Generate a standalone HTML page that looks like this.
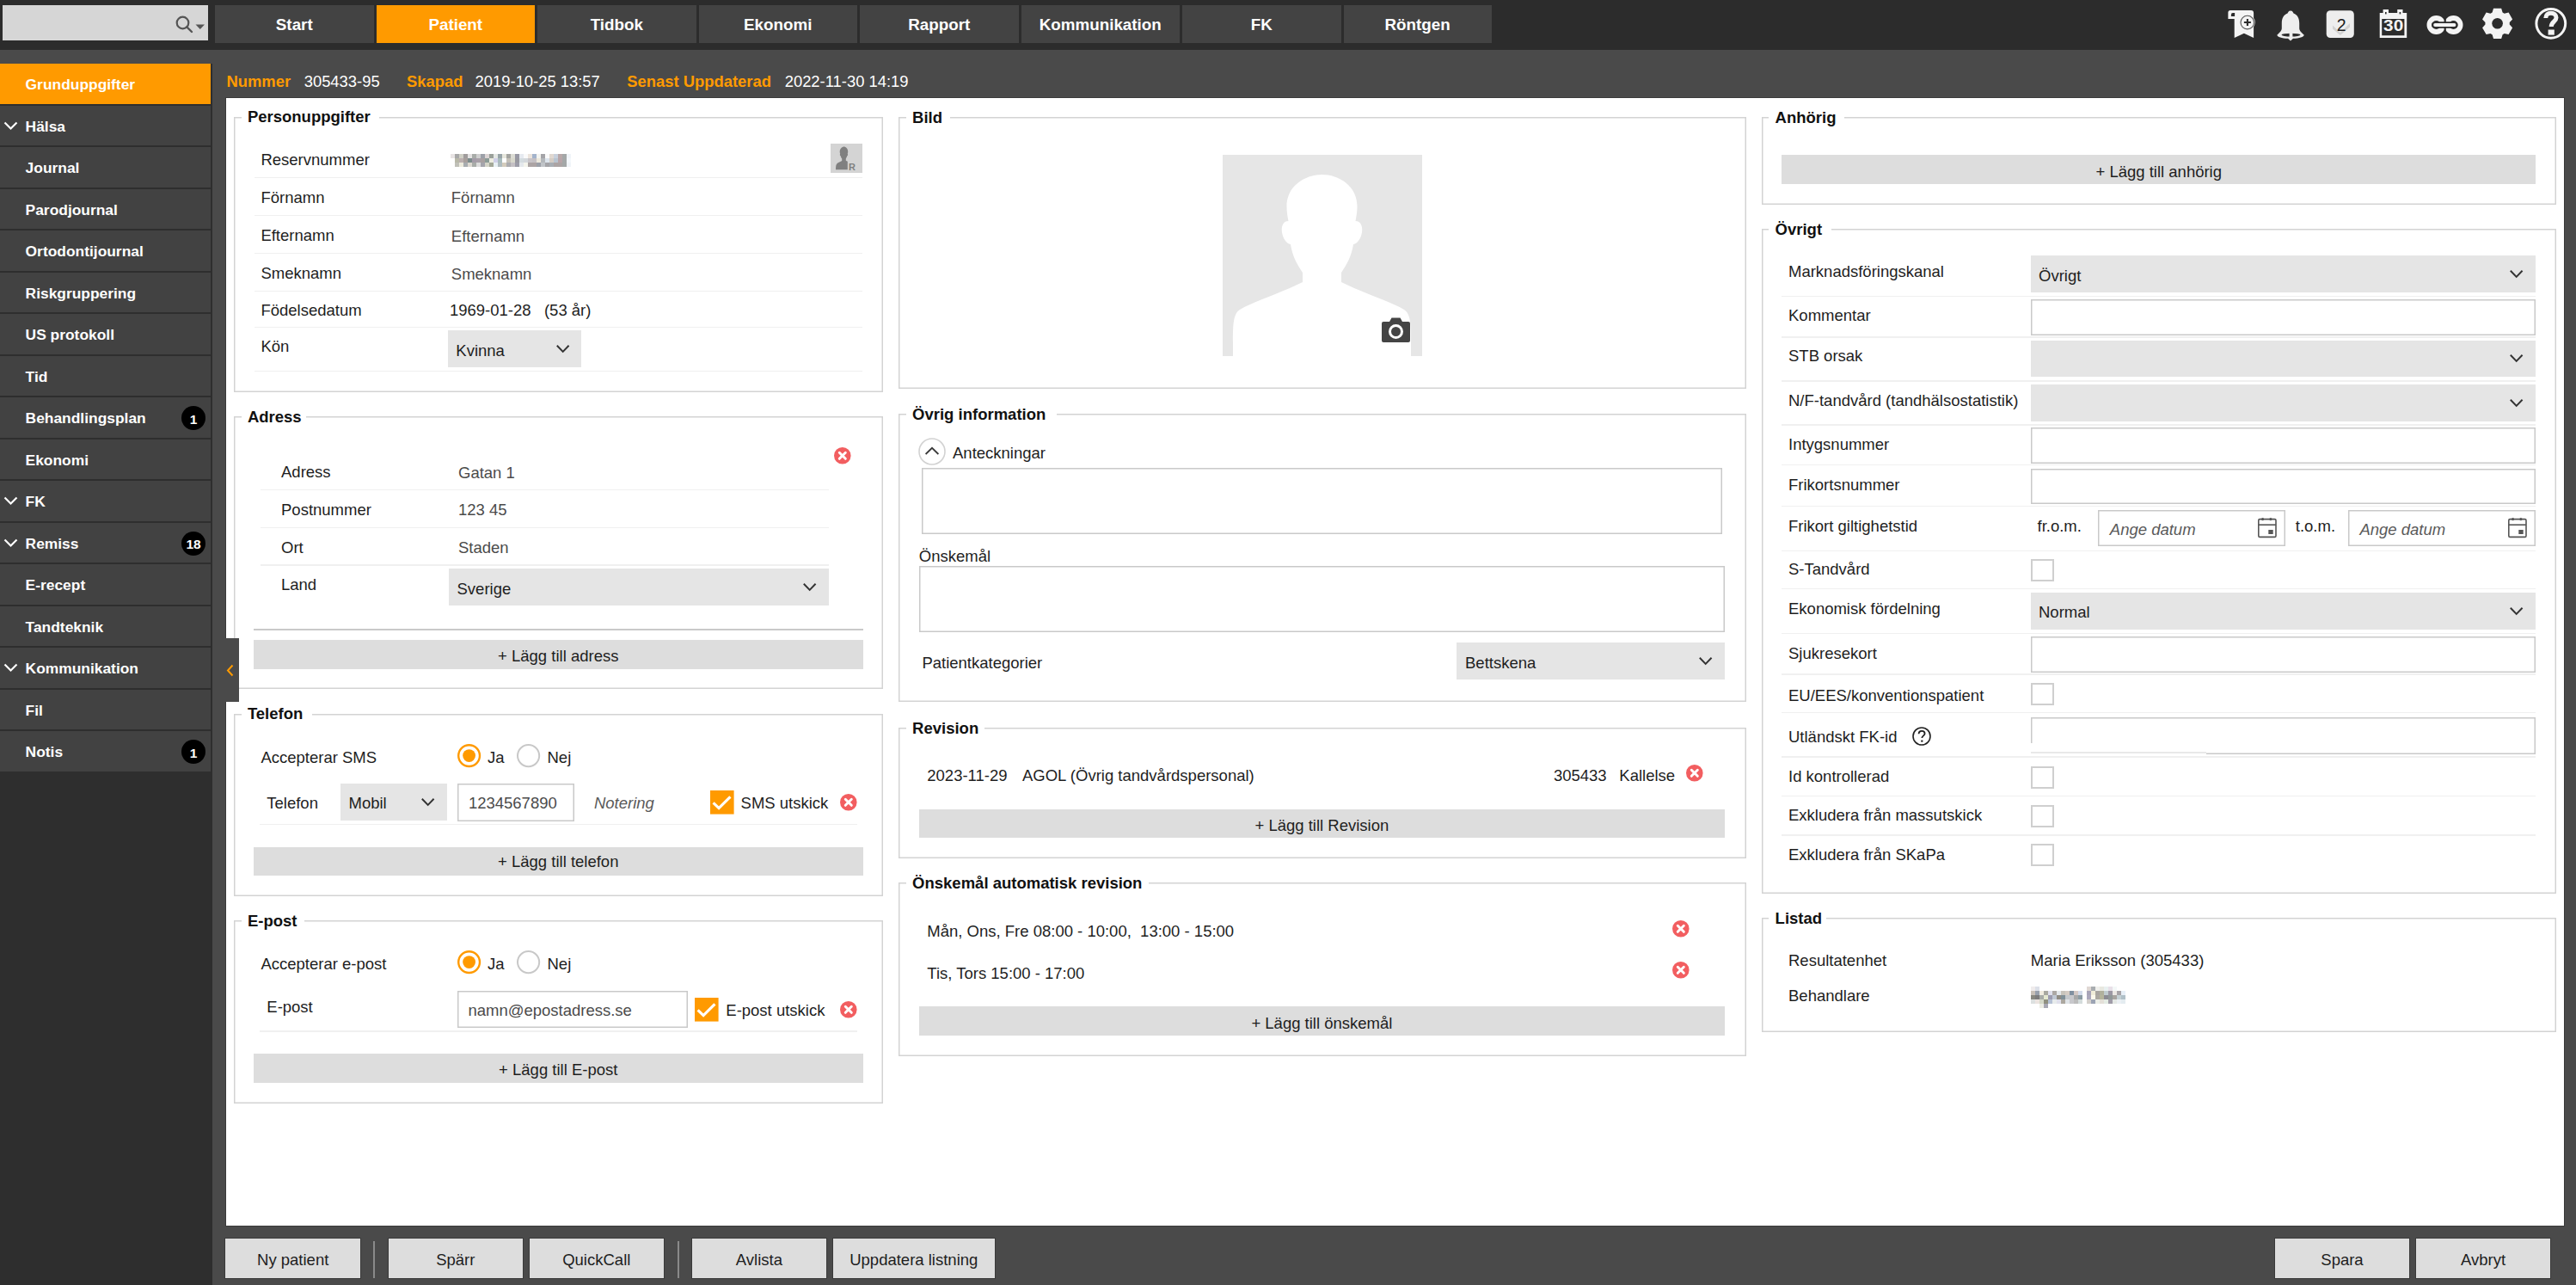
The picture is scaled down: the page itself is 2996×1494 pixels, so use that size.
<!DOCTYPE html><html><head><meta charset="utf-8"><style>
html,body{margin:0;padding:0;}
body{width:2996px;height:1494px;overflow:hidden;position:relative;background:#4a4a4a;font-family:"Liberation Sans",sans-serif;}
.t{position:absolute;white-space:nowrap;line-height:1;}
.r{position:absolute;box-sizing:border-box;}
svg{position:absolute;overflow:visible;}
</style></head><body>
<div class="r" style="left:0.0px;top:0.0px;width:2996.0px;height:57.5px;background:#2c2c2c;"></div>
<div class="r" style="left:3.0px;top:6.0px;width:239.0px;height:40.6px;background:#d6d6d6;"></div>
<svg style="left:203px;top:17px" width="40" height="24" viewBox="0 0 40 24"><circle cx="9.5" cy="9.5" r="6.8" fill="none" stroke="#555" stroke-width="2.2"/><line x1="14.3" y1="14.3" x2="20" y2="20" stroke="#555" stroke-width="2.4" stroke-linecap="round"/><polygon points="24.5,11.5 35,11.5 29.75,17" fill="#555"/></svg>
<div class="r" style="left:250.0px;top:6.0px;width:184.5px;height:44.0px;background:#434343;"></div>
<div class="t" style="left:250.0px;width:184.5px;text-align:center;top:20.1px;font-size:18.8px;font-weight:700;color:#ffffff;">Start</div>
<div class="r" style="left:437.5px;top:6.0px;width:184.5px;height:44.0px;background:#ff9a00;"></div>
<div class="t" style="left:437.5px;width:184.5px;text-align:center;top:20.1px;font-size:18.8px;font-weight:700;color:#ffffff;">Patient</div>
<div class="r" style="left:625.0px;top:6.0px;width:184.5px;height:44.0px;background:#434343;"></div>
<div class="t" style="left:625.0px;width:184.5px;text-align:center;top:20.1px;font-size:18.8px;font-weight:700;color:#ffffff;">Tidbok</div>
<div class="r" style="left:812.5px;top:6.0px;width:184.5px;height:44.0px;background:#434343;"></div>
<div class="t" style="left:812.5px;width:184.5px;text-align:center;top:20.1px;font-size:18.8px;font-weight:700;color:#ffffff;">Ekonomi</div>
<div class="r" style="left:1000.0px;top:6.0px;width:184.5px;height:44.0px;background:#434343;"></div>
<div class="t" style="left:1000.0px;width:184.5px;text-align:center;top:20.1px;font-size:18.8px;font-weight:700;color:#ffffff;">Rapport</div>
<div class="r" style="left:1187.5px;top:6.0px;width:184.5px;height:44.0px;background:#434343;"></div>
<div class="t" style="left:1187.5px;width:184.5px;text-align:center;top:20.1px;font-size:18.8px;font-weight:700;color:#ffffff;">Kommunikation</div>
<div class="r" style="left:1375.0px;top:6.0px;width:184.5px;height:44.0px;background:#434343;"></div>
<div class="t" style="left:1375.0px;width:184.5px;text-align:center;top:20.1px;font-size:18.8px;font-weight:700;color:#ffffff;">FK</div>
<div class="r" style="left:1562.5px;top:6.0px;width:172.2px;height:44.0px;background:#434343;"></div>
<div class="t" style="left:1562.5px;width:172.2px;text-align:center;top:20.1px;font-size:18.8px;font-weight:700;color:#ffffff;">Röntgen</div>
<div class="r" style="left:0.0px;top:74.2px;width:247.0px;height:1419.8px;background:#2e2e2e;"></div>
<div class="r" style="left:0.0px;top:74.2px;width:245.0px;height:46.5px;background:#ff9a00;"></div>
<div class="t" style="left:29.6px;top:90.2px;font-size:17.4px;font-weight:700;color:#ffffff;">Grunduppgifter</div>
<div class="r" style="left:0.0px;top:122.7px;width:245.0px;height:46.5px;background:#424242;"></div>
<div class="t" style="left:29.6px;top:138.7px;font-size:17.4px;font-weight:700;color:#ffffff;">Hälsa</div>
<svg style="left:4px;top:140.7px" width="17" height="10" viewBox="0 0 17 10"><polyline points="1.5,1.5 8.5,8.5 15.5,1.5" fill="none" stroke="#fff" stroke-width="2.2"/></svg>
<div class="r" style="left:0.0px;top:171.2px;width:245.0px;height:46.5px;background:#424242;"></div>
<div class="t" style="left:29.6px;top:187.2px;font-size:17.4px;font-weight:700;color:#ffffff;">Journal</div>
<div class="r" style="left:0.0px;top:219.7px;width:245.0px;height:46.5px;background:#424242;"></div>
<div class="t" style="left:29.6px;top:235.7px;font-size:17.4px;font-weight:700;color:#ffffff;">Parodjournal</div>
<div class="r" style="left:0.0px;top:268.2px;width:245.0px;height:46.5px;background:#424242;"></div>
<div class="t" style="left:29.6px;top:284.2px;font-size:17.4px;font-weight:700;color:#ffffff;">Ortodontijournal</div>
<div class="r" style="left:0.0px;top:316.7px;width:245.0px;height:46.5px;background:#424242;"></div>
<div class="t" style="left:29.6px;top:332.7px;font-size:17.4px;font-weight:700;color:#ffffff;">Riskgruppering</div>
<div class="r" style="left:0.0px;top:365.2px;width:245.0px;height:46.5px;background:#424242;"></div>
<div class="t" style="left:29.6px;top:381.2px;font-size:17.4px;font-weight:700;color:#ffffff;">US protokoll</div>
<div class="r" style="left:0.0px;top:413.7px;width:245.0px;height:46.5px;background:#424242;"></div>
<div class="t" style="left:29.6px;top:429.7px;font-size:17.4px;font-weight:700;color:#ffffff;">Tid</div>
<div class="r" style="left:0.0px;top:462.2px;width:245.0px;height:46.5px;background:#424242;"></div>
<div class="t" style="left:29.6px;top:478.2px;font-size:17.4px;font-weight:700;color:#ffffff;">Behandlingsplan</div>
<div class="r" style="left:211.0px;top:472.2px;width:28.0px;height:28.0px;background:#000;border-radius:50%;"></div>
<div class="t" style="left:211.0px;width:28.0px;text-align:center;top:479.6px;font-size:15.5px;font-weight:700;color:#fff;">1</div>
<div class="r" style="left:0.0px;top:510.7px;width:245.0px;height:46.5px;background:#424242;"></div>
<div class="t" style="left:29.6px;top:526.7px;font-size:17.4px;font-weight:700;color:#ffffff;">Ekonomi</div>
<div class="r" style="left:0.0px;top:559.2px;width:245.0px;height:46.5px;background:#424242;"></div>
<div class="t" style="left:29.6px;top:575.2px;font-size:17.4px;font-weight:700;color:#ffffff;">FK</div>
<svg style="left:4px;top:577.2px" width="17" height="10" viewBox="0 0 17 10"><polyline points="1.5,1.5 8.5,8.5 15.5,1.5" fill="none" stroke="#fff" stroke-width="2.2"/></svg>
<div class="r" style="left:0.0px;top:607.7px;width:245.0px;height:46.5px;background:#424242;"></div>
<div class="t" style="left:29.6px;top:623.7px;font-size:17.4px;font-weight:700;color:#ffffff;">Remiss</div>
<svg style="left:4px;top:625.7px" width="17" height="10" viewBox="0 0 17 10"><polyline points="1.5,1.5 8.5,8.5 15.5,1.5" fill="none" stroke="#fff" stroke-width="2.2"/></svg>
<div class="r" style="left:211.0px;top:617.7px;width:28.0px;height:28.0px;background:#000;border-radius:50%;"></div>
<div class="t" style="left:211.0px;width:28.0px;text-align:center;top:625.1px;font-size:15.5px;font-weight:700;color:#fff;">18</div>
<div class="r" style="left:0.0px;top:656.2px;width:245.0px;height:46.5px;background:#424242;"></div>
<div class="t" style="left:29.6px;top:672.2px;font-size:17.4px;font-weight:700;color:#ffffff;">E-recept</div>
<div class="r" style="left:0.0px;top:704.7px;width:245.0px;height:46.5px;background:#424242;"></div>
<div class="t" style="left:29.6px;top:720.7px;font-size:17.4px;font-weight:700;color:#ffffff;">Tandteknik</div>
<div class="r" style="left:0.0px;top:753.2px;width:245.0px;height:46.5px;background:#424242;"></div>
<div class="t" style="left:29.6px;top:769.2px;font-size:17.4px;font-weight:700;color:#ffffff;">Kommunikation</div>
<svg style="left:4px;top:771.2px" width="17" height="10" viewBox="0 0 17 10"><polyline points="1.5,1.5 8.5,8.5 15.5,1.5" fill="none" stroke="#fff" stroke-width="2.2"/></svg>
<div class="r" style="left:0.0px;top:801.7px;width:245.0px;height:46.5px;background:#424242;"></div>
<div class="t" style="left:29.6px;top:817.7px;font-size:17.4px;font-weight:700;color:#ffffff;">Fil</div>
<div class="r" style="left:0.0px;top:850.2px;width:245.0px;height:46.5px;background:#424242;"></div>
<div class="t" style="left:29.6px;top:866.2px;font-size:17.4px;font-weight:700;color:#ffffff;">Notis</div>
<div class="r" style="left:211.0px;top:860.2px;width:28.0px;height:28.0px;background:#000;border-radius:50%;"></div>
<div class="t" style="left:211.0px;width:28.0px;text-align:center;top:867.6px;font-size:15.5px;font-weight:700;color:#fff;">1</div>
<div class="t" style="left:263.5px;top:86.4px;font-size:18.4px;font-weight:700;color:#ff9a00;">Nummer</div>
<div class="t" style="left:353.7px;top:86.4px;font-size:18.4px;color:#ffffff;">305433-95</div>
<div class="t" style="left:473.0px;top:86.4px;font-size:18.4px;font-weight:700;color:#ff9a00;">Skapad</div>
<div class="t" style="left:552.6px;top:86.4px;font-size:18.4px;color:#ffffff;">2019-10-25 13:57</div>
<div class="t" style="left:729.3px;top:86.4px;font-size:18.4px;font-weight:700;color:#ff9a00;">Senast Uppdaterad</div>
<div class="t" style="left:912.7px;top:86.4px;font-size:18.4px;color:#ffffff;">2022-11-30 14:19</div>
<div class="r" style="left:261.5px;top:112.8px;width:2721.5px;height:1313.5px;background:#3a3a3a;"></div>
<div class="r" style="left:262.5px;top:113.6px;width:2719.7px;height:1311.9px;background:#ffffff;"></div>
<div class="r" style="left:271.9px;top:135.7px;width:754.9px;height:320.4px;box-shadow:inset 0 0 0 1.5px #d3d3d3;"></div>
<div class="r" style="left:280.6px;top:133.4px;width:160.0px;height:6.0px;background:#ffffff;"></div>
<div class="t" style="left:287.9px;top:127.4px;font-size:18.5px;font-weight:700;color:#111111;">Personuppgifter</div>
<div class="t" style="left:303.4px;top:176.9px;font-size:18.5px;color:#1e1e1e;">Reservnummer</div>
<div class="t" style="left:303.4px;top:220.5px;font-size:18.5px;color:#1e1e1e;">Förnamn</div>
<div class="t" style="left:524.8px;top:221.4px;font-size:18.5px;color:#4b4b4b;">Förnamn</div>
<div class="t" style="left:303.4px;top:265.0px;font-size:18.5px;color:#1e1e1e;">Efternamn</div>
<div class="t" style="left:524.8px;top:265.8px;font-size:18.5px;color:#4b4b4b;">Efternamn</div>
<div class="t" style="left:303.4px;top:308.6px;font-size:18.5px;color:#1e1e1e;">Smeknamn</div>
<div class="t" style="left:524.8px;top:309.8px;font-size:18.5px;color:#4b4b4b;">Smeknamn</div>
<div class="t" style="left:303.4px;top:351.6px;font-size:18.5px;color:#1e1e1e;">Födelsedatum</div>
<div class="t" style="left:303.4px;top:394.4px;font-size:18.5px;color:#1e1e1e;">Kön</div>
<div class="r" style="left:296.0px;top:206.0px;width:707.0px;height:1.4px;background:#f0f0f0;"></div>
<div class="r" style="left:296.0px;top:250.1px;width:707.0px;height:1.4px;background:#f0f0f0;"></div>
<div class="r" style="left:296.0px;top:293.7px;width:707.0px;height:1.4px;background:#f0f0f0;"></div>
<div class="r" style="left:296.0px;top:337.5px;width:707.0px;height:1.4px;background:#f0f0f0;"></div>
<div class="r" style="left:296.0px;top:379.5px;width:707.0px;height:1.4px;background:#f0f0f0;"></div>
<div class="r" style="left:296.0px;top:430.9px;width:707.0px;height:1.4px;background:#f0f0f0;"></div>
<svg style="left:524px;top:179px" width="140" height="15" viewBox="0 0 140 15" shape-rendering="crispEdges" style="filter:blur(.6px)"><rect x="0" y="0" width="5" height="5" fill="#e8e4e4"/><rect x="5" y="0" width="5" height="5" fill="#a8a8a8"/><rect x="10" y="0" width="5" height="5" fill="#cfcfc5"/><rect x="15" y="0" width="5" height="5" fill="#a09c9c"/><rect x="20" y="0" width="5" height="5" fill="#e4e2e2"/><rect x="25" y="0" width="5" height="5" fill="#a8aca8"/><rect x="30" y="0" width="5" height="5" fill="#cfcfcf"/><rect x="35" y="0" width="5" height="5" fill="#9ca0a8"/><rect x="40" y="0" width="5" height="5" fill="#dcd4d4"/><rect x="45" y="0" width="5" height="5" fill="#9aa09a"/><rect x="50" y="0" width="5" height="5" fill="#e4e8e4"/><rect x="55" y="0" width="5" height="5" fill="#98a4a8"/><rect x="60" y="0" width="5" height="5" fill="#e6e6dc"/><rect x="65" y="0" width="5" height="5" fill="#a4a4a0"/><rect x="70" y="0" width="5" height="5" fill="#dcdcd4"/><rect x="75" y="0" width="5" height="5" fill="#9898a4"/><rect x="80" y="0" width="5" height="5" fill="#e6eaf0"/><rect x="85" y="0" width="5" height="5" fill="#fafafa"/><rect x="90" y="0" width="5" height="5" fill="#ece4dc"/><rect x="95" y="0" width="5" height="5" fill="#a4b4cc"/><rect x="100" y="0" width="5" height="5" fill="#f4f4f0"/><rect x="105" y="0" width="5" height="5" fill="#a4a4a8"/><rect x="110" y="0" width="5" height="5" fill="#fafafa"/><rect x="115" y="0" width="5" height="5" fill="#e0d8d0"/><rect x="120" y="0" width="5" height="5" fill="#c8d0dc"/><rect x="125" y="0" width="5" height="5" fill="#b8a8a8"/><rect x="130" y="0" width="5" height="5" fill="#a4a8a8"/><rect x="135" y="0" width="5" height="5" fill="#f0f4f8"/><rect x="0" y="5" width="5" height="5" fill="#ffffff"/><rect x="5" y="5" width="5" height="5" fill="#b8b8a8"/><rect x="10" y="5" width="5" height="5" fill="#bcb0b0"/><rect x="15" y="5" width="5" height="5" fill="#a8a09c"/><rect x="20" y="5" width="5" height="5" fill="#7c8c8c"/><rect x="25" y="5" width="5" height="5" fill="#a49ca8"/><rect x="30" y="5" width="5" height="5" fill="#a8a0a8"/><rect x="35" y="5" width="5" height="5" fill="#a8a0a0"/><rect x="40" y="5" width="5" height="5" fill="#8c9c98"/><rect x="45" y="5" width="5" height="5" fill="#ecece0"/><rect x="50" y="5" width="5" height="5" fill="#d0d0e8"/><rect x="55" y="5" width="5" height="5" fill="#a8bcbc"/><rect x="60" y="5" width="5" height="5" fill="#ffffff"/><rect x="65" y="5" width="5" height="5" fill="#c4c0b8"/><rect x="70" y="5" width="5" height="5" fill="#d8d8cc"/><rect x="75" y="5" width="5" height="5" fill="#9898a0"/><rect x="80" y="5" width="5" height="5" fill="#d4dce0"/><rect x="85" y="5" width="5" height="5" fill="#d4d8dc"/><rect x="90" y="5" width="5" height="5" fill="#c8c4c8"/><rect x="95" y="5" width="5" height="5" fill="#c4c0c4"/><rect x="100" y="5" width="5" height="5" fill="#ece8dc"/><rect x="105" y="5" width="5" height="5" fill="#b4b8bc"/><rect x="110" y="5" width="5" height="5" fill="#dce4ec"/><rect x="115" y="5" width="5" height="5" fill="#d4ccc4"/><rect x="120" y="5" width="5" height="5" fill="#b8c4d0"/><rect x="125" y="5" width="5" height="5" fill="#b8a4a8"/><rect x="130" y="5" width="5" height="5" fill="#a4a8a8"/><rect x="135" y="5" width="5" height="5" fill="#f4f8fc"/><rect x="0" y="10" width="5" height="5" fill="#ffffff"/><rect x="5" y="10" width="5" height="5" fill="#c0c0b8"/><rect x="10" y="10" width="5" height="5" fill="#eceadc"/><rect x="15" y="10" width="5" height="5" fill="#a8acb0"/><rect x="20" y="10" width="5" height="5" fill="#dcd8d0"/><rect x="25" y="10" width="5" height="5" fill="#a8aca8"/><rect x="30" y="10" width="5" height="5" fill="#dcdcdc"/><rect x="35" y="10" width="5" height="5" fill="#a4a4ac"/><rect x="40" y="10" width="5" height="5" fill="#d4d4c8"/><rect x="45" y="10" width="5" height="5" fill="#a4a898"/><rect x="50" y="10" width="5" height="5" fill="#e8f0f4"/><rect x="55" y="10" width="5" height="5" fill="#b0bcc0"/><rect x="60" y="10" width="5" height="5" fill="#d4ccbc"/><rect x="65" y="10" width="5" height="5" fill="#acacb0"/><rect x="70" y="10" width="5" height="5" fill="#c4c0c4"/><rect x="75" y="10" width="5" height="5" fill="#9c9ca8"/><rect x="80" y="10" width="5" height="5" fill="#e4e8ec"/><rect x="85" y="10" width="5" height="5" fill="#f4f4ec"/><rect x="90" y="10" width="5" height="5" fill="#aca4a4"/><rect x="95" y="10" width="5" height="5" fill="#aca4a4"/><rect x="100" y="10" width="5" height="5" fill="#9ca0a8"/><rect x="105" y="10" width="5" height="5" fill="#c0c4c8"/><rect x="110" y="10" width="5" height="5" fill="#a4a4a8"/><rect x="115" y="10" width="5" height="5" fill="#a8aeb4"/><rect x="120" y="10" width="5" height="5" fill="#aca4a4"/><rect x="125" y="10" width="5" height="5" fill="#aca4a4"/><rect x="130" y="10" width="5" height="5" fill="#a4a8a8"/><rect x="135" y="10" width="5" height="5" fill="#f0f4f8"/></svg>
<div class="r" style="left:966.1px;top:167.3px;width:37.1px;height:33.9px;background:#d4d4d4;"></div>
<svg style="left:966px;top:167px" width="37" height="34" viewBox="0 0 37 34"><path d="M15 3.5 c3.2 0 5.2 2.6 5.2 5.8 c0 1 -.2 1.8 -.5 2.6 c.6 .3 .6 1.6 -.3 2.2 c-.4 1.6 -1.2 2.7 -1.6 3.4 v2.2 l2 1 v9.6 h-13.8 c0 -3.8 .3 -6.6 2.2 -7.7 l5 -2.6 v-2.4 c-.6 -.8 -1.2 -1.9 -1.6 -3.3 c-.9 -.5 -1 -1.8 -.4 -2.2 c-.3 -.8 -.5 -1.7 -.5 -2.6 c0 -3.3 2.2 -5.8 4.3 -5.8z" fill="#808080"/><text x="21" y="30.5" font-family="Liberation Sans" font-weight="700" font-size="11" fill="#808080">R</text></svg>
<div class="t" style="left:522.9px;top:351.6px;font-size:18.5px;color:#1e1e1e;">1969-01-28&nbsp;&nbsp;&nbsp;(53 år)</div>
<div class="r" style="left:520.8px;top:384.4px;width:155.2px;height:43.0px;background:#e5e5e5;"></div>
<div class="t" style="left:530.3px;top:398.6px;font-size:18.5px;color:#1e1e1e;">Kvinna</div>
<svg style="left:647.3px;top:401.0px" width="15.4" height="8.7" viewBox="0 0 15.4 8.7"><polyline points="0.8,0.8 7.7,7.9 14.6,0.8" fill="none" stroke="#333" stroke-width="2"/></svg>
<div class="r" style="left:271.9px;top:484.2px;width:754.9px;height:317.2px;box-shadow:inset 0 0 0 1.5px #d3d3d3;"></div>
<div class="r" style="left:280.6px;top:482.0px;width:75.6px;height:6.0px;background:#ffffff;"></div>
<div class="t" style="left:287.9px;top:476.0px;font-size:18.5px;font-weight:700;color:#111111;">Adress</div>
<div class="t" style="left:327.0px;top:539.8px;font-size:18.5px;color:#1e1e1e;">Adress</div>
<div class="t" style="left:533.0px;top:540.8px;font-size:18.5px;color:#4b4b4b;">Gatan 1</div>
<div class="t" style="left:327.0px;top:583.8px;font-size:18.5px;color:#1e1e1e;">Postnummer</div>
<div class="t" style="left:533.0px;top:584.3px;font-size:18.5px;color:#4b4b4b;">123 45</div>
<div class="t" style="left:327.0px;top:627.5px;font-size:18.5px;color:#1e1e1e;">Ort</div>
<div class="t" style="left:533.0px;top:627.8px;font-size:18.5px;color:#4b4b4b;">Staden</div>
<div class="t" style="left:327.0px;top:670.8px;font-size:18.5px;color:#1e1e1e;">Land</div>
<div class="r" style="left:302.8px;top:568.6px;width:661.2px;height:1.4px;background:#f0f0f0;"></div>
<div class="r" style="left:302.8px;top:612.7px;width:661.2px;height:1.4px;background:#f0f0f0;"></div>
<div class="r" style="left:302.8px;top:656.3px;width:661.2px;height:1.4px;background:#f0f0f0;"></div>
<div class="r" style="left:521.7px;top:660.8px;width:442.3px;height:43.2px;background:#e5e5e5;"></div>
<div class="t" style="left:531.5px;top:675.8px;font-size:18.5px;color:#1e1e1e;">Sverige</div>
<svg style="left:934.3px;top:677.5px" width="15.4" height="8.7" viewBox="0 0 15.4 8.7"><polyline points="0.8,0.8 7.7,7.9 14.6,0.8" fill="none" stroke="#333" stroke-width="2"/></svg>
<svg style="left:970.2px;top:519.7px" width="19.6" height="19.6" viewBox="0 0 20 20"><circle cx="10" cy="10" r="10" fill="#f25e60"/><path d="M6.4 6.4 L13.6 13.6 M13.6 6.4 L6.4 13.6" stroke="#fff" stroke-width="3" stroke-linecap="round"/></svg>
<div class="r" style="left:295.0px;top:731.0px;width:708.5px;height:1.5px;background:#c9c9c9;"></div>
<div class="r" style="left:295.0px;top:744.0px;width:708.5px;height:33.7px;background:#dddddd;"></div>
<div class="t" style="left:295.0px;width:708.5px;text-align:center;top:753.5px;font-size:18.5px;color:#1e1e1e;">+ Lägg till adress</div>
<div class="r" style="left:271.9px;top:829.5px;width:754.9px;height:212.9px;box-shadow:inset 0 0 0 1.5px #d3d3d3;"></div>
<div class="r" style="left:280.6px;top:827.2px;width:82.6px;height:6.0px;background:#ffffff;"></div>
<div class="t" style="left:287.9px;top:821.2px;font-size:18.5px;font-weight:700;color:#111111;">Telefon</div>
<div class="t" style="left:303.4px;top:871.8px;font-size:18.5px;color:#1e1e1e;">Accepterar SMS</div>
<svg style="left:531.7px;top:864.5px" width="27.2" height="27.2" viewBox="0 0 27.2 27.2"><circle cx="13.6" cy="13.6" r="12.4" fill="#fff" stroke="#ff9a00" stroke-width="2.4"/><circle cx="13.6" cy="13.6" r="7.4" fill="#ff9a00"/></svg>
<div class="t" style="left:567.0px;top:871.8px;font-size:18.5px;color:#1e1e1e;">Ja</div>
<svg style="left:600.6px;top:864.5px" width="27.2" height="27.2" viewBox="0 0 27.2 27.2"><circle cx="13.6" cy="13.6" r="12.6" fill="#fff" stroke="#c8c8c8" stroke-width="2"/></svg>
<div class="t" style="left:636.5px;top:871.8px;font-size:18.5px;color:#1e1e1e;">Nej</div>
<div class="t" style="left:310.3px;top:925.2px;font-size:18.5px;color:#1e1e1e;">Telefon</div>
<div class="r" style="left:395.5px;top:911.0px;width:124.7px;height:43.0px;background:#e5e5e5;"></div>
<div class="t" style="left:405.5px;top:925.2px;font-size:18.5px;color:#1e1e1e;">Mobil</div>
<svg style="left:490.3px;top:927.6px" width="15.4" height="8.7" viewBox="0 0 15.4 8.7"><polyline points="0.8,0.8 7.7,7.9 14.6,0.8" fill="none" stroke="#333" stroke-width="2"/></svg>
<div class="r" style="left:531.7px;top:911.4px;width:136.5px;height:43.2px;background:#ffffff;box-shadow:inset 0 0 0 1.5px #c9c9c9;"></div>
<div class="t" style="left:544.9px;top:925.3px;font-size:18.5px;color:#4b4b4b;">1234567890</div>
<div class="t" style="left:690.9px;top:925.2px;font-size:18.5px;color:#5a5a5a;font-style:italic;">Notering</div>
<svg style="left:825.5px;top:919.0px" width="27.6" height="27.6" viewBox="0 0 27.6 27.6"><rect x="0" y="0" width="27.6" height="27.6" fill="#ff9a00"/><polyline points="3.6,14.3 10.1,20.6 23.4,7.4" fill="none" stroke="#fff" stroke-width="3.2"/></svg>
<div class="t" style="left:861.6px;top:925.2px;font-size:18.5px;color:#1e1e1e;">SMS utskick</div>
<svg style="left:976.5px;top:923.0px" width="19.6" height="19.6" viewBox="0 0 20 20"><circle cx="10" cy="10" r="10" fill="#f25e60"/><path d="M6.4 6.4 L13.6 13.6 M13.6 6.4 L6.4 13.6" stroke="#fff" stroke-width="3" stroke-linecap="round"/></svg>
<div class="r" style="left:302.0px;top:957.9px;width:695.0px;height:1.4px;background:#f0f0f0;"></div>
<div class="r" style="left:295.0px;top:984.8px;width:708.5px;height:33.2px;background:#dddddd;"></div>
<div class="t" style="left:295.0px;width:708.5px;text-align:center;top:993.2px;font-size:18.5px;color:#1e1e1e;">+ Lägg till telefon</div>
<div class="r" style="left:271.9px;top:1070.0px;width:754.9px;height:212.9px;box-shadow:inset 0 0 0 1.5px #d3d3d3;"></div>
<div class="r" style="left:280.6px;top:1067.8px;width:73.5px;height:6.0px;background:#ffffff;"></div>
<div class="t" style="left:287.9px;top:1061.8px;font-size:18.5px;font-weight:700;color:#111111;">E-post</div>
<div class="t" style="left:303.4px;top:1112.4px;font-size:18.5px;color:#1e1e1e;">Accepterar e-post</div>
<svg style="left:531.7px;top:1105.4px" width="27.2" height="27.2" viewBox="0 0 27.2 27.2"><circle cx="13.6" cy="13.6" r="12.4" fill="#fff" stroke="#ff9a00" stroke-width="2.4"/><circle cx="13.6" cy="13.6" r="7.4" fill="#ff9a00"/></svg>
<div class="t" style="left:567.0px;top:1112.4px;font-size:18.5px;color:#1e1e1e;">Ja</div>
<svg style="left:600.6px;top:1105.4px" width="27.2" height="27.2" viewBox="0 0 27.2 27.2"><circle cx="13.6" cy="13.6" r="12.6" fill="#fff" stroke="#c8c8c8" stroke-width="2"/></svg>
<div class="t" style="left:636.5px;top:1112.4px;font-size:18.5px;color:#1e1e1e;">Nej</div>
<div class="t" style="left:310.3px;top:1162.2px;font-size:18.5px;color:#1e1e1e;">E-post</div>
<div class="r" style="left:531.7px;top:1152.4px;width:267.9px;height:42.2px;background:#ffffff;box-shadow:inset 0 0 0 1.5px #c9c9c9;"></div>
<div class="t" style="left:544.4px;top:1165.8px;font-size:18.5px;color:#4b4b4b;">namn@epostadress.se</div>
<svg style="left:808.0px;top:1160.0px" width="27.6" height="27.6" viewBox="0 0 27.6 27.6"><rect x="0" y="0" width="27.6" height="27.6" fill="#ff9a00"/><polyline points="3.6,14.3 10.1,20.6 23.4,7.4" fill="none" stroke="#fff" stroke-width="3.2"/></svg>
<div class="t" style="left:844.3px;top:1165.8px;font-size:18.5px;color:#1e1e1e;">E-post utskick</div>
<svg style="left:976.5px;top:1163.7px" width="19.6" height="19.6" viewBox="0 0 20 20"><circle cx="10" cy="10" r="10" fill="#f25e60"/><path d="M6.4 6.4 L13.6 13.6 M13.6 6.4 L6.4 13.6" stroke="#fff" stroke-width="3" stroke-linecap="round"/></svg>
<div class="r" style="left:302.0px;top:1198.3px;width:695.0px;height:1.4px;background:#f0f0f0;"></div>
<div class="r" style="left:295.0px;top:1225.4px;width:708.5px;height:33.6px;background:#dddddd;"></div>
<div class="t" style="left:295.0px;width:708.5px;text-align:center;top:1234.8px;font-size:18.5px;color:#1e1e1e;">+ Lägg till E-post</div>
<div class="r" style="left:262.0px;top:742.0px;width:16.0px;height:74.0px;background:#4a4a4a;"></div>
<svg style="left:263px;top:772px" width="10" height="15" viewBox="0 0 10 15"><polyline points="7.5,1.5 2,7.5 7.5,13.5" fill="none" stroke="#ff9a00" stroke-width="2"/></svg>
<div class="r" style="left:1045.0px;top:135.8px;width:985.5px;height:316.3px;box-shadow:inset 0 0 0 1.5px #d3d3d3;"></div>
<div class="r" style="left:1053.8px;top:133.5px;width:51.0px;height:6.0px;background:#ffffff;"></div>
<div class="t" style="left:1061.1px;top:127.5px;font-size:18.5px;font-weight:700;color:#111111;">Bild</div>
<div class="r" style="left:1422.0px;top:179.7px;width:231.6px;height:234.3px;background:#e6e6e6;"></div>
<svg style="left:1422px;top:179.7px" width="231.6" height="234.3" viewBox="0 0 231.6 234.3"><path d="M115.6 23 C 96 23 74.5 36 74.5 60 C 74.5 66 75.5 72 76.5 77 C 70 77 68 84 69 90 C 70 97 74 103 79 104 C 81 118 87 128 93 137 L 93 148 L 78 155 C 55 165 33 172 20 180 C 11 186 12 200 12 234.3 L 219 234.3 C 219 200 220 186 211 180 C 198 172 176 165 153 155 L 138 148 L 138 137 C 144 128 150 118 152 104 C 157 103 161 97 162 90 C 163 84 161 77 154.5 77 C 155.5 72 156.5 66 156.5 60 C 156.5 36 135 23 115.6 23 Z" fill="#ffffff"/></svg>
<svg style="left:1606px;top:368px" width="35" height="32" viewBox="0 0 35 32"><path d="M3 6 h7 l2.5 -4.5 h10 l2.5 4.5 h7 a2 2 0 0 1 2 2 v20 a2 2 0 0 1 -2 2 h-29 a2 2 0 0 1 -2 -2 v-20 a2 2 0 0 1 2 -2z" fill="#444"/><circle cx="17.5" cy="17.5" r="7" fill="none" stroke="#fff" stroke-width="3"/></svg>
<div class="r" style="left:1045.0px;top:481.1px;width:985.5px;height:335.3px;box-shadow:inset 0 0 0 1.5px #d3d3d3;"></div>
<div class="r" style="left:1053.8px;top:478.8px;width:175.0px;height:6.0px;background:#ffffff;"></div>
<div class="t" style="left:1061.1px;top:472.8px;font-size:18.5px;font-weight:700;color:#111111;">Övrig information</div>
<svg style="left:1068.2px;top:508.7px" width="32" height="32" viewBox="0 0 32 32"><circle cx="16" cy="16" r="15" fill="#fff" stroke="#d2d2d2" stroke-width="1.6"/><polyline points="8.6,19 16,11.8 23.4,19" fill="none" stroke="#3a3a3a" stroke-width="1.8"/></svg>
<div class="t" style="left:1108.0px;top:517.8px;font-size:18.5px;color:#1e1e1e;">Anteckningar</div>
<div class="r" style="left:1072.4px;top:544.0px;width:930.9px;height:77.2px;background:#ffffff;box-shadow:inset 0 0 0 1.5px #c9c9c9;"></div>
<div class="t" style="left:1068.8px;top:637.8px;font-size:18.5px;color:#1e1e1e;">Önskemål</div>
<div class="r" style="left:1068.8px;top:658.0px;width:937.2px;height:77.2px;background:#ffffff;box-shadow:inset 0 0 0 1.5px #c9c9c9;"></div>
<div class="t" style="left:1072.4px;top:761.6px;font-size:18.5px;color:#1e1e1e;">Patientkategorier</div>
<div class="r" style="left:1694.0px;top:747.0px;width:312.0px;height:42.8px;background:#e5e5e5;"></div>
<div class="t" style="left:1704.0px;top:761.6px;font-size:18.5px;color:#1e1e1e;">Bettskena</div>
<svg style="left:1976.3px;top:763.5px" width="15.4" height="8.7" viewBox="0 0 15.4 8.7"><polyline points="0.8,0.8 7.7,7.9 14.6,0.8" fill="none" stroke="#333" stroke-width="2"/></svg>
<div class="r" style="left:1045.0px;top:845.8px;width:985.5px;height:152.4px;box-shadow:inset 0 0 0 1.5px #d3d3d3;"></div>
<div class="r" style="left:1053.8px;top:843.5px;width:91.0px;height:6.0px;background:#ffffff;"></div>
<div class="t" style="left:1061.1px;top:837.5px;font-size:18.5px;font-weight:700;color:#111111;">Revision</div>
<div class="t" style="left:1078.3px;top:892.8px;font-size:18.5px;color:#1e1e1e;">2023-11-29</div>
<div class="t" style="left:1189.0px;top:892.8px;font-size:18.5px;color:#1e1e1e;">AGOL (Övrig tandvårdspersonal)</div>
<div class="t" style="left:1806.9px;top:892.8px;font-size:18.5px;color:#1e1e1e;">305433</div>
<div class="t" style="left:1883.3px;top:892.8px;font-size:18.5px;color:#1e1e1e;">Kallelse</div>
<svg style="left:1960.6px;top:888.6px" width="19.6" height="19.6" viewBox="0 0 20 20"><circle cx="10" cy="10" r="10" fill="#f25e60"/><path d="M6.4 6.4 L13.6 13.6 M13.6 6.4 L6.4 13.6" stroke="#fff" stroke-width="3" stroke-linecap="round"/></svg>
<div class="r" style="left:1068.8px;top:940.8px;width:937.2px;height:33.6px;background:#dddddd;"></div>
<div class="t" style="left:1068.8px;width:937.2px;text-align:center;top:951.3px;font-size:18.5px;color:#1e1e1e;">+ Lägg till Revision</div>
<div class="r" style="left:1045.0px;top:1026.2px;width:985.5px;height:201.5px;box-shadow:inset 0 0 0 1.5px #d3d3d3;"></div>
<div class="r" style="left:1053.8px;top:1024.0px;width:282.0px;height:6.0px;background:#ffffff;"></div>
<div class="t" style="left:1061.1px;top:1018.0px;font-size:18.5px;font-weight:700;color:#111111;">Önskemål automatisk revision</div>
<div class="t" style="left:1078.3px;top:1074.1px;font-size:18.5px;color:#1e1e1e;">Mån, Ons, Fre 08:00 - 10:00,&nbsp;&nbsp;13:00 - 15:00</div>
<svg style="left:1944.8px;top:1070.2px" width="19.6" height="19.6" viewBox="0 0 20 20"><circle cx="10" cy="10" r="10" fill="#f25e60"/><path d="M6.4 6.4 L13.6 13.6 M13.6 6.4 L6.4 13.6" stroke="#fff" stroke-width="3" stroke-linecap="round"/></svg>
<div class="t" style="left:1078.3px;top:1122.8px;font-size:18.5px;color:#1e1e1e;">Tis, Tors 15:00 - 17:00</div>
<svg style="left:1944.8px;top:1118.2px" width="19.6" height="19.6" viewBox="0 0 20 20"><circle cx="10" cy="10" r="10" fill="#f25e60"/><path d="M6.4 6.4 L13.6 13.6 M13.6 6.4 L6.4 13.6" stroke="#fff" stroke-width="3" stroke-linecap="round"/></svg>
<div class="r" style="left:1068.8px;top:1170.4px;width:937.2px;height:33.6px;background:#dddddd;"></div>
<div class="t" style="left:1068.8px;width:937.2px;text-align:center;top:1180.8px;font-size:18.5px;color:#1e1e1e;">+ Lägg till önskemål</div>
<div class="r" style="left:2048.6px;top:135.9px;width:924.4px;height:101.7px;box-shadow:inset 0 0 0 1.5px #d3d3d3;"></div>
<div class="r" style="left:2057.3px;top:133.7px;width:88.0px;height:6.0px;background:#ffffff;"></div>
<div class="t" style="left:2064.6px;top:127.7px;font-size:18.5px;font-weight:700;color:#111111;">Anhörig</div>
<div class="r" style="left:2072.3px;top:179.8px;width:876.9px;height:34.1px;background:#dddddd;"></div>
<div class="t" style="left:2072.3px;width:876.9px;text-align:center;top:191.3px;font-size:18.5px;color:#1e1e1e;">+ Lägg till anhörig</div>
<div class="r" style="left:2048.6px;top:265.9px;width:924.4px;height:773.1px;box-shadow:inset 0 0 0 1.5px #d3d3d3;"></div>
<div class="r" style="left:2057.3px;top:263.6px;width:73.0px;height:6.0px;background:#ffffff;"></div>
<div class="t" style="left:2064.6px;top:257.6px;font-size:18.5px;font-weight:700;color:#111111;">Övrigt</div>
<div class="t" style="left:2080.0px;top:307.1px;font-size:18.5px;color:#1e1e1e;">Marknadsföringskanal</div>
<div class="r" style="left:2361.8px;top:297.4px;width:587.4px;height:42.6px;background:#e5e5e5;"></div>
<div class="t" style="left:2371.0px;top:311.8px;font-size:18.5px;color:#1e1e1e;">Övrigt</div>
<svg style="left:2919.3px;top:313.8px" width="15.4" height="8.7" viewBox="0 0 15.4 8.7"><polyline points="0.8,0.8 7.7,7.9 14.6,0.8" fill="none" stroke="#333" stroke-width="2"/></svg>
<div class="r" style="left:2072.0px;top:343.8px;width:877.2px;height:1.4px;background:#f0f0f0;"></div>
<div class="t" style="left:2080.0px;top:358.3px;font-size:18.5px;color:#1e1e1e;">Kommentar</div>
<div class="r" style="left:2361.8px;top:348.2px;width:587.4px;height:42.0px;background:#ffffff;box-shadow:inset 0 0 0 1.5px #c9c9c9;"></div>
<div class="r" style="left:2072.0px;top:391.3px;width:877.2px;height:1.4px;background:#f0f0f0;"></div>
<div class="t" style="left:2080.0px;top:404.8px;font-size:18.5px;color:#1e1e1e;">STB orsak</div>
<div class="r" style="left:2361.8px;top:395.8px;width:587.4px;height:42.6px;background:#e5e5e5;"></div>
<svg style="left:2919.3px;top:412.2px" width="15.4" height="8.7" viewBox="0 0 15.4 8.7"><polyline points="0.8,0.8 7.7,7.9 14.6,0.8" fill="none" stroke="#333" stroke-width="2"/></svg>
<div class="r" style="left:2072.0px;top:442.2px;width:877.2px;height:1.4px;background:#f0f0f0;"></div>
<div class="t" style="left:2080.0px;top:456.6px;font-size:18.5px;color:#1e1e1e;">N/F-tandvård (tandhälsostatistik)</div>
<div class="r" style="left:2361.8px;top:447.0px;width:587.4px;height:43.4px;background:#e5e5e5;"></div>
<svg style="left:2919.3px;top:463.8px" width="15.4" height="8.7" viewBox="0 0 15.4 8.7"><polyline points="0.8,0.8 7.7,7.9 14.6,0.8" fill="none" stroke="#333" stroke-width="2"/></svg>
<div class="r" style="left:2072.0px;top:493.3px;width:877.2px;height:1.4px;background:#f0f0f0;"></div>
<div class="t" style="left:2080.0px;top:508.2px;font-size:18.5px;color:#1e1e1e;">Intygsnummer</div>
<div class="r" style="left:2361.8px;top:497.4px;width:587.4px;height:42.0px;background:#ffffff;box-shadow:inset 0 0 0 1.5px #c9c9c9;"></div>
<div class="r" style="left:2072.0px;top:540.1px;width:877.2px;height:1.4px;background:#f0f0f0;"></div>
<div class="t" style="left:2080.0px;top:554.6px;font-size:18.5px;color:#1e1e1e;">Frikortsnummer</div>
<div class="r" style="left:2361.8px;top:544.6px;width:587.4px;height:41.9px;background:#ffffff;box-shadow:inset 0 0 0 1.5px #c9c9c9;"></div>
<div class="r" style="left:2072.0px;top:587.6px;width:877.2px;height:1.4px;background:#f0f0f0;"></div>
<div class="t" style="left:2080.0px;top:602.8px;font-size:18.5px;color:#1e1e1e;">Frikort giltighetstid</div>
<div class="t" style="left:2369.5px;top:602.8px;font-size:18.5px;color:#1e1e1e;">fr.o.m.</div>
<div class="r" style="left:2440.0px;top:592.8px;width:218.0px;height:42.7px;background:#ffffff;box-shadow:inset 0 0 0 1.5px #c9c9c9;"></div>
<div class="t" style="left:2453.8px;top:606.5px;font-size:18.5px;color:#5a5a5a;font-style:italic;">Ange datum</div>
<div class="t" style="left:2669.8px;top:602.8px;font-size:18.5px;color:#1e1e1e;">t.o.m.</div>
<div class="r" style="left:2731.0px;top:592.8px;width:218.2px;height:42.7px;background:#ffffff;box-shadow:inset 0 0 0 1.5px #c9c9c9;"></div>
<div class="t" style="left:2744.4px;top:606.5px;font-size:18.5px;color:#5a5a5a;font-style:italic;">Ange datum</div>
<svg style="left:2626.2px;top:601px" width="22" height="24" viewBox="0 0 22 24"><rect x="0.8" y="2.6" width="20.2" height="20.8" rx="1.5" fill="none" stroke="#555" stroke-width="1.6"/><line x1="0.8" y1="9.2" x2="21" y2="9.2" stroke="#555" stroke-width="1.6"/><circle cx="5.6" cy="2.6" r="1.6" fill="#555"/><circle cx="14.9" cy="2.6" r="1.6" fill="#555"/><rect x="12.3" y="15" width="5.4" height="5" fill="#555"/></svg>
<svg style="left:2917.0px;top:601px" width="22" height="24" viewBox="0 0 22 24"><rect x="0.8" y="2.6" width="20.2" height="20.8" rx="1.5" fill="none" stroke="#555" stroke-width="1.6"/><line x1="0.8" y1="9.2" x2="21" y2="9.2" stroke="#555" stroke-width="1.6"/><circle cx="5.6" cy="2.6" r="1.6" fill="#555"/><circle cx="14.9" cy="2.6" r="1.6" fill="#555"/><rect x="12.3" y="15" width="5.4" height="5" fill="#555"/></svg>
<div class="r" style="left:2072.0px;top:639.6px;width:877.2px;height:1.4px;background:#f0f0f0;"></div>
<div class="t" style="left:2080.0px;top:652.9px;font-size:18.5px;color:#1e1e1e;">S-Tandvård</div>
<div class="r" style="left:2361.8px;top:649.6px;width:27.0px;height:26.0px;background:#fff;box-shadow:inset 0 0 0 2px #cfcfcf;"></div>
<div class="r" style="left:2072.0px;top:684.1px;width:877.2px;height:1.4px;background:#f0f0f0;"></div>
<div class="t" style="left:2080.0px;top:699.3px;font-size:18.5px;color:#1e1e1e;">Ekonomisk fördelning</div>
<div class="r" style="left:2361.8px;top:689.3px;width:587.4px;height:43.0px;background:#e5e5e5;"></div>
<div class="t" style="left:2371.0px;top:703.0px;font-size:18.5px;color:#1e1e1e;">Normal</div>
<svg style="left:2919.3px;top:705.9px" width="15.4" height="8.7" viewBox="0 0 15.4 8.7"><polyline points="0.8,0.8 7.7,7.9 14.6,0.8" fill="none" stroke="#333" stroke-width="2"/></svg>
<div class="r" style="left:2072.0px;top:736.1px;width:877.2px;height:1.4px;background:#f0f0f0;"></div>
<div class="t" style="left:2080.0px;top:751.3px;font-size:18.5px;color:#1e1e1e;">Sjukresekort</div>
<div class="r" style="left:2361.8px;top:739.8px;width:587.4px;height:42.6px;background:#ffffff;box-shadow:inset 0 0 0 1.5px #c9c9c9;"></div>
<div class="r" style="left:2072.0px;top:783.3px;width:877.2px;height:1.4px;background:#f0f0f0;"></div>
<div class="t" style="left:2080.0px;top:799.5px;font-size:18.5px;color:#1e1e1e;">EU/EES/konventionspatient</div>
<div class="r" style="left:2361.8px;top:793.6px;width:27.0px;height:26.0px;background:#fff;box-shadow:inset 0 0 0 2px #cfcfcf;"></div>
<div class="r" style="left:2072.0px;top:827.8px;width:877.2px;height:1.4px;background:#f0f0f0;"></div>
<div class="t" style="left:2080.0px;top:847.8px;font-size:18.5px;color:#1e1e1e;">Utländskt FK-id</div>
<svg style="left:2223.5px;top:844.5px" width="22" height="22" viewBox="0 0 22 22"><circle cx="11" cy="11" r="10" fill="none" stroke="#222" stroke-width="1.6"/><path d="M7.6 8.3 c0 -2.2 1.6 -3.5 3.5 -3.5 c2 0 3.5 1.3 3.5 3.1 c0 2.4 -3.3 2.6 -3.3 5.2" fill="none" stroke="#222" stroke-width="1.8"/><circle cx="11.3" cy="16.6" r="1.2" fill="#222"/></svg>
<div class="r" style="left:2361.8px;top:833.7px;width:587.4px;height:43.0px;box-shadow:inset 0 0 0 1.5px #c9c9c9;"></div>
<div class="r" style="left:2358.8px;top:864.0px;width:207.2px;height:16.0px;background:#ffffff;"></div>
<div class="r" style="left:2361.8px;top:873.5px;width:204.2px;height:2.0px;background:#e9e9e9;"></div>
<div class="r" style="left:2072.0px;top:879.3px;width:877.2px;height:1.4px;background:#f0f0f0;"></div>
<div class="t" style="left:2080.0px;top:893.8px;font-size:18.5px;color:#1e1e1e;">Id kontrollerad</div>
<div class="r" style="left:2361.8px;top:890.5px;width:27.0px;height:26.0px;background:#fff;box-shadow:inset 0 0 0 2px #cfcfcf;"></div>
<div class="r" style="left:2072.0px;top:925.1px;width:877.2px;height:1.4px;background:#f0f0f0;"></div>
<div class="t" style="left:2080.0px;top:939.1px;font-size:18.5px;color:#1e1e1e;">Exkludera från massutskick</div>
<div class="r" style="left:2361.8px;top:935.8px;width:27.0px;height:26.0px;background:#fff;box-shadow:inset 0 0 0 2px #cfcfcf;"></div>
<div class="r" style="left:2072.0px;top:970.3px;width:877.2px;height:1.4px;background:#f0f0f0;"></div>
<div class="t" style="left:2080.0px;top:984.8px;font-size:18.5px;color:#1e1e1e;">Exkludera från SKaPa</div>
<div class="r" style="left:2361.8px;top:980.7px;width:27.0px;height:26.0px;background:#fff;box-shadow:inset 0 0 0 2px #cfcfcf;"></div>
<div class="r" style="left:2048.6px;top:1067.2px;width:924.4px;height:132.8px;box-shadow:inset 0 0 0 1.5px #d3d3d3;"></div>
<div class="r" style="left:2057.3px;top:1065.0px;width:67.0px;height:6.0px;background:#ffffff;"></div>
<div class="t" style="left:2064.6px;top:1059.0px;font-size:18.5px;font-weight:700;color:#111111;">Listad</div>
<div class="t" style="left:2080.0px;top:1108.4px;font-size:18.5px;color:#1e1e1e;">Resultatenhet</div>
<div class="t" style="left:2361.8px;top:1108.4px;font-size:18.5px;color:#1e1e1e;">Maria Eriksson (305433)</div>
<div class="t" style="left:2080.0px;top:1149.2px;font-size:18.5px;color:#1e1e1e;">Behandlare</div>
<svg style="left:2362px;top:1147px" width="110" height="25" viewBox="0 0 110 25" shape-rendering="crispEdges"><rect x="0" y="0" width="5" height="5" fill="#f0ecec"/><rect x="5" y="0" width="5" height="5" fill="#dce0e8"/><rect x="65" y="0" width="5" height="5" fill="#e0d8d4"/><rect x="70" y="0" width="5" height="5" fill="#a8acb0"/><rect x="75" y="0" width="5" height="5" fill="#f0f0ec"/><rect x="80" y="0" width="5" height="5" fill="#e8e8e0"/><rect x="85" y="0" width="5" height="5" fill="#e8f0f0"/><rect x="90" y="0" width="5" height="5" fill="#e8e0e8"/><rect x="95" y="0" width="5" height="5" fill="#f4f8f8"/><rect x="0" y="5" width="5" height="5" fill="#c8c0b8"/><rect x="5" y="5" width="5" height="5" fill="#98a0ac"/><rect x="10" y="5" width="5" height="5" fill="#f0ece0"/><rect x="15" y="5" width="5" height="5" fill="#a8a8a0"/><rect x="20" y="5" width="5" height="5" fill="#e0e0ec"/><rect x="25" y="5" width="5" height="5" fill="#aca8a4"/><rect x="30" y="5" width="5" height="5" fill="#e4e8ec"/><rect x="35" y="5" width="5" height="5" fill="#c8c4bc"/><rect x="40" y="5" width="5" height="5" fill="#d4ccc4"/><rect x="45" y="5" width="5" height="5" fill="#8090a0"/><rect x="50" y="5" width="5" height="5" fill="#d4c8c4"/><rect x="55" y="5" width="5" height="5" fill="#d4dcec"/><rect x="65" y="5" width="5" height="5" fill="#a8a4b8"/><rect x="70" y="5" width="5" height="5" fill="#f0ecd8"/><rect x="75" y="5" width="5" height="5" fill="#a8a4a0"/><rect x="80" y="5" width="5" height="5" fill="#b0b09c"/><rect x="85" y="5" width="5" height="5" fill="#c0ccd0"/><rect x="90" y="5" width="5" height="5" fill="#9c98a4"/><rect x="95" y="5" width="5" height="5" fill="#ece8e4"/><rect x="100" y="5" width="5" height="5" fill="#a8a4a8"/><rect x="105" y="5" width="5" height="5" fill="#e8f0f8"/><rect x="0" y="10" width="5" height="5" fill="#888880"/><rect x="5" y="10" width="5" height="5" fill="#7c7c7c"/><rect x="10" y="10" width="5" height="5" fill="#a8aca8"/><rect x="15" y="10" width="5" height="5" fill="#e4e8d0"/><rect x="20" y="10" width="5" height="5" fill="#9c9cb0"/><rect x="25" y="10" width="5" height="5" fill="#c0c8d4"/><rect x="30" y="10" width="5" height="5" fill="#908c84"/><rect x="35" y="10" width="5" height="5" fill="#809098"/><rect x="40" y="10" width="5" height="5" fill="#c4c8cc"/><rect x="45" y="10" width="5" height="5" fill="#c8c8cc"/><rect x="50" y="10" width="5" height="5" fill="#a8a8a8"/><rect x="55" y="10" width="5" height="5" fill="#8c9ca4"/><rect x="65" y="10" width="5" height="5" fill="#aca8bc"/><rect x="70" y="10" width="5" height="5" fill="#fcf8ec"/><rect x="75" y="10" width="5" height="5" fill="#aca8a0"/><rect x="80" y="10" width="5" height="5" fill="#b4b49c"/><rect x="85" y="10" width="5" height="5" fill="#8c8c94"/><rect x="90" y="10" width="5" height="5" fill="#909898"/><rect x="95" y="10" width="5" height="5" fill="#a8a4a0"/><rect x="100" y="10" width="5" height="5" fill="#c4d0d4"/><rect x="105" y="10" width="5" height="5" fill="#b0c0c8"/><rect x="0" y="15" width="5" height="5" fill="#dce0e0"/><rect x="5" y="15" width="5" height="5" fill="#ece4e0"/><rect x="10" y="15" width="5" height="5" fill="#d4d8c8"/><rect x="15" y="15" width="5" height="5" fill="#909080"/><rect x="20" y="15" width="5" height="5" fill="#b4c0d4"/><rect x="25" y="15" width="5" height="5" fill="#e8ecec"/><rect x="30" y="15" width="5" height="5" fill="#e0e0ec"/><rect x="35" y="15" width="5" height="5" fill="#aca8a0"/><rect x="40" y="15" width="5" height="5" fill="#e0e4e8"/><rect x="45" y="15" width="5" height="5" fill="#c8c8cc"/><rect x="50" y="15" width="5" height="5" fill="#bcbcbc"/><rect x="55" y="15" width="5" height="5" fill="#d4dcdc"/><rect x="65" y="15" width="5" height="5" fill="#d4d0cc"/><rect x="70" y="15" width="5" height="5" fill="#9ca4b4"/><rect x="75" y="15" width="5" height="5" fill="#eceee8"/><rect x="80" y="15" width="5" height="5" fill="#e4e0d8"/><rect x="85" y="15" width="5" height="5" fill="#e4ece4"/><rect x="90" y="15" width="5" height="5" fill="#a09ca8"/><rect x="95" y="15" width="5" height="5" fill="#e4e8e4"/><rect x="100" y="15" width="5" height="5" fill="#ecf0f4"/><rect x="105" y="15" width="5" height="5" fill="#e4ecf0"/><rect x="10" y="20" width="5" height="5" fill="#ecece4"/><rect x="15" y="20" width="5" height="5" fill="#a8a8b4"/></svg>
<div class="r" style="left:261.4px;top:1438.6px;width:158.6px;height:48.6px;background:#3a3a3a;"></div>
<div class="r" style="left:262.4px;top:1439.6px;width:156.6px;height:46.6px;background:#dddddd;"></div>
<div class="t" style="left:262.4px;width:156.6px;text-align:center;top:1456.1px;font-size:18.5px;color:#1e1e1e;">Ny patient</div>
<div class="r" style="left:450.7px;top:1438.6px;width:158.2px;height:48.6px;background:#3a3a3a;"></div>
<div class="r" style="left:451.7px;top:1439.6px;width:156.2px;height:46.6px;background:#dddddd;"></div>
<div class="t" style="left:451.7px;width:156.2px;text-align:center;top:1456.1px;font-size:18.5px;color:#1e1e1e;">Spärr</div>
<div class="r" style="left:614.7px;top:1438.6px;width:158.2px;height:48.6px;background:#3a3a3a;"></div>
<div class="r" style="left:615.7px;top:1439.6px;width:156.2px;height:46.6px;background:#dddddd;"></div>
<div class="t" style="left:615.7px;width:156.2px;text-align:center;top:1456.1px;font-size:18.5px;color:#1e1e1e;">QuickCall</div>
<div class="r" style="left:803.7px;top:1438.6px;width:158.5px;height:48.6px;background:#3a3a3a;"></div>
<div class="r" style="left:804.7px;top:1439.6px;width:156.5px;height:46.6px;background:#dddddd;"></div>
<div class="t" style="left:804.7px;width:156.5px;text-align:center;top:1456.1px;font-size:18.5px;color:#1e1e1e;">Avlista</div>
<div class="r" style="left:967.7px;top:1438.6px;width:190.2px;height:48.6px;background:#3a3a3a;"></div>
<div class="r" style="left:968.7px;top:1439.6px;width:188.2px;height:46.6px;background:#dddddd;"></div>
<div class="t" style="left:968.7px;width:188.2px;text-align:center;top:1456.1px;font-size:18.5px;color:#1e1e1e;">Uppdatera listning</div>
<div class="r" style="left:2644.8px;top:1438.6px;width:158.4px;height:48.6px;background:#3a3a3a;"></div>
<div class="r" style="left:2645.8px;top:1439.6px;width:156.4px;height:46.6px;background:#dddddd;"></div>
<div class="t" style="left:2645.8px;width:156.4px;text-align:center;top:1456.1px;font-size:18.5px;color:#1e1e1e;">Spara</div>
<div class="r" style="left:2808.8px;top:1438.6px;width:158.5px;height:48.6px;background:#3a3a3a;"></div>
<div class="r" style="left:2809.8px;top:1439.6px;width:156.5px;height:46.6px;background:#dddddd;"></div>
<div class="t" style="left:2809.8px;width:156.5px;text-align:center;top:1456.1px;font-size:18.5px;color:#1e1e1e;">Avbryt</div>
<div class="r" style="left:434.0px;top:1443.0px;width:2.0px;height:43.0px;background:#8a8a8a;"></div>
<div class="r" style="left:787.6px;top:1443.0px;width:2.0px;height:43.0px;background:#8a8a8a;"></div>
<svg style="left:2580px;top:0px" width="416" height="57" viewBox="2580 0 416 57"><path d="M2591.4 21.9 V14.5 a2.6 2.6 0 0 1 2.6 -2.6 H2618 a3.1 3.1 0 0 1 3.1 3.1 V43.9 L2609.9 38.7 L2598.7 43.9 V21.9 Z" fill="#f4f4f4"/><path d="M2594.9 19.1 V16.9 a2 2 0 0 1 2 -2 h2.2 v4.2 Z" fill="#2c2c2c"/><circle cx="2613.8" cy="26.1" r="8.9" fill="#f4f4f4"/><circle cx="2613.8" cy="26.1" r="7.8" fill="none" stroke="#555" stroke-width="1.1"/><path d="M2613.9 22 V30 M2609.9 26 H2617.9" stroke="#2c2c2c" stroke-width="2.1"/><path d="M2664 12.4 C2661.5 12.4 2661 14.5 2660.5 15.5 C2656 17 2653.8 21.5 2653.8 27 V33 C2653.8 36 2651 38 2648.4 40.6 C2648.4 43.3 2654 44.8 2661 44.8 L2664 47.6 L2667 44.8 C2674 44.8 2679.7 43.3 2679.7 40.6 C2677 38 2674.2 36 2674.2 33 V27 C2674.2 21.5 2672 17 2667.5 15.5 C2667 14.5 2666.5 12.4 2664 12.4Z" fill="#eeeeee"/><ellipse cx="2664.5" cy="40.6" rx="11" ry="1.9" fill="#2c2c2c"/><rect x="2662.6" y="38" width="3.8" height="5" fill="#eeeeee"/><rect x="2705.7" y="12.3" width="32.1" height="31.7" rx="4.5" fill="#eeeeee"/><path d="M2713 29.5 L2721.8 38 L2733 27 V31.5 L2721.8 41 L2713 33.5 Z" fill="#d2d2d2"/><text x="2723.3" y="35.7" text-anchor="middle" font-family="Liberation Sans" font-size="19.5" fill="#1e1e1e">2</text><path d="M2767.7 14.9 H2799.2 V44.1 H2767.7 Z M2770.2 21.9 V41.3 H2796.4 V21.9 Z" fill="#f4f4f4" fill-rule="evenodd"/><rect x="2771.6" y="11" width="6.4" height="4" fill="#f4f4f4"/><rect x="2788.2" y="11" width="6.3" height="4" fill="#f4f4f4"/><rect x="2774" y="14" width="1.6" height="2.4" fill="#2c2c2c"/><rect x="2790.6" y="14" width="1.6" height="2.4" fill="#2c2c2c"/><text x="2772.1" y="36.4" font-family="Liberation Sans" font-weight="700" font-size="17.6" textLength="23.1" lengthAdjust="spacingAndGlyphs" fill="#f4f4f4">30</text><circle cx="2833.5" cy="29" r="8" fill="none" stroke="#f4f4f4" stroke-width="6"/><circle cx="2853.5" cy="29" r="8" fill="none" stroke="#f4f4f4" stroke-width="6"/><rect x="2842.6" y="16" width="2.2" height="26" fill="#2c2c2c"/><rect x="2828" y="25.2" width="30.5" height="7.5" rx="3.75" fill="#2c2c2c"/><rect x="2830.2" y="27.1" width="26.2" height="3.9" rx="1.95" fill="#f4f4f4"/><g transform="translate(2904.6 27.3)"><path d="M-6.00 -12.87 L-4.55 -17.62 L4.55 -17.62 L6.00 -12.87 L8.14 -11.63 L12.99 -12.75 L17.54 -4.87 L14.15 -1.23 L14.15 1.23 L17.54 4.87 L12.99 12.75 L8.14 11.63 L6.00 12.87 L4.55 17.62 L-4.55 17.62 L-6.00 12.87 L-8.14 11.63 L-12.99 12.75 L-17.54 4.87 L-14.15 1.23 L-14.15 -1.23 L-17.54 -4.87 L-12.99 -12.75 L-8.14 -11.63Z" fill="#f4f4f4"/><circle r="6.3" fill="#2c2c2c"/></g><circle cx="2966.8" cy="27.3" r="16.9" fill="none" stroke="#f4f4f4" stroke-width="3"/><path d="M2960.8 21 C2960.8 17 2963.5 15.2 2966.8 15.2 C2970.5 15.2 2973 17.5 2973 20.5 C2973 25 2967.2 25.5 2967.2 31" fill="none" stroke="#f4f4f4" stroke-width="5"/><rect x="2963.6" y="34.5" width="7.2" height="6.1" fill="#f4f4f4"/></svg>
</body></html>
